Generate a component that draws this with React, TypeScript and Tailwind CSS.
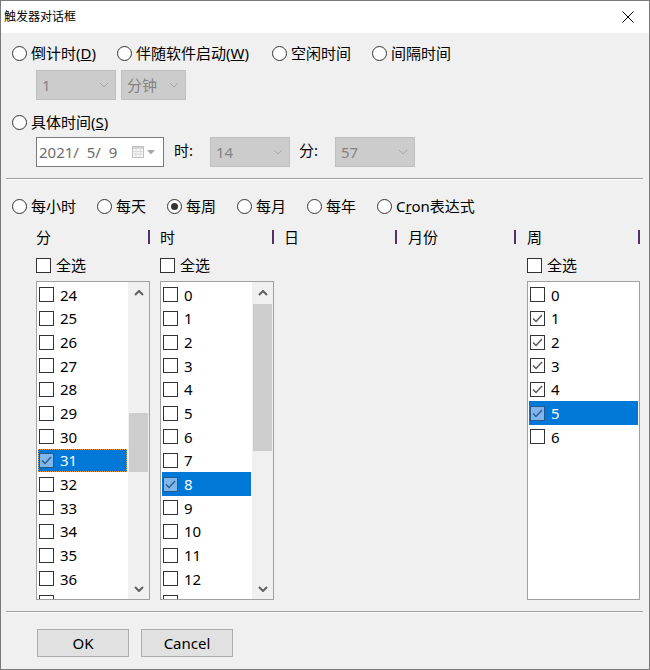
import type { ReactNode } from "react";

function Radio({
  label,
  checked,
  className = "",
}: {
  label: ReactNode;
  checked?: boolean;
  className?: string;
}) {
  return (
    <div className={`flex items-center h-[20px] shrink-0 ${className}`}>
      <span className="w-[15px] h-[15px] rounded-full border border-[#333333] bg-white flex items-center justify-center shrink-0">
        {checked && <span className="w-[7px] h-[7px] rounded-full bg-[#333333]" />}
      </span>
      <span className="ml-[4px] text-[15px] leading-[20px] whitespace-nowrap">{label}</span>
    </div>
  );
}

function Check({ checked, selected }: { checked?: boolean; selected?: boolean }) {
  return (
    <span
      className={`w-[15px] h-[15px] shrink-0 border flex items-center justify-center ${
        selected ? "border-[#23598f] bg-[#80b6ea]" : "border-[#333333] bg-white"
      }`}
    >
      {checked && (
        <svg width="13" height="13" viewBox="0 0 13 13">
          <path
            d="M2 6.5 L5 9.5 L11 3"
            fill="none"
            stroke={selected ? "#285d92" : "#555555"}
            strokeWidth="1.4"
          />
        </svg>
      )}
    </span>
  );
}

function Chevron({ up, color = "#a6a6a6", bold }: { up?: boolean; color?: string; bold?: boolean }) {
  return (
    <svg width="10" height="6" viewBox="0 0 10 6">
      <path
        d={up ? "M1 5 L5 1 L9 5" : "M1 1 L5 5 L9 1"}
        fill="none"
        stroke={color}
        strokeWidth={bold ? 2 : 1}
      />
    </svg>
  );
}

function Combo({ value, className }: { value: string; className: string }) {
  return (
    <div
      className={`h-[30px] bg-[#cccccc] border border-[#bfbfbf] flex items-center justify-between pl-[5px] pr-[6px] text-[15px] text-[#838383] ${className}`}
    >
      <span className="leading-[20px]">{value}</span>
      <Chevron />
    </div>
  );
}

type ListProps = {
  items: string[];
  checked: string[];
  selected?: string;
  focused?: boolean;
  thumb?: string;
  more?: boolean;
  className: string;
};

function ListBox({ items, checked, selected, focused, thumb, more, className }: ListProps) {
  return (
    <div className={`h-[319px] border border-[#a0a0a0] bg-white flex ${className}`}>
      <div className="flex-1 overflow-hidden pt-[1px]">
        {items.map((it) => {
          const sel = it === selected;
          return (
            <div
              key={it}
              className={`h-[23.67px] mx-[1px] pl-[1px] flex items-center gap-[6px] text-[15px] leading-[20px] ${
                sel ? "bg-[#0078d7] text-white" : "text-black"
              } ${sel && focused ? "outline-1 outline-dotted outline-[#e89a40] -outline-offset-1" : ""}`}
            >
              <Check checked={checked.includes(it)} selected={sel} />
              <span>{it}</span>
            </div>
          );
        })}
        {/* next row, only its box top peeks out */}
        {more && (
          <div className="h-[23.67px] mx-[1px] pl-[1px] flex items-center">
            <Check />
          </div>
        )}
      </div>
      {thumb && (
        <div className="w-[21px] shrink-0 bg-[#f0f0f0] flex flex-col">
          <div className="h-[21px] flex items-center justify-center">
            <Chevron up bold color="#606060" />
          </div>
          <div className="flex-1">
            <div className={`mx-[1px] bg-[#cdcdcd] ${thumb}`} />
          </div>
          <div className="h-[21px] flex items-center justify-center">
            <Chevron bold color="#606060" />
          </div>
        </div>
      )}
    </div>
  );
}

function Header({ label, className }: { label: string; className: string }) {
  return (
    <div className={`flex items-center justify-between h-[20px] shrink-0 ${className}`}>
      <span className="text-[15px] leading-[20px]">{label}</span>
      <span className="w-[2px] h-[14px] bg-[#54306a]" />
    </div>
  );
}

function Separator({ className = "" }: { className?: string }) {
  return <div className={`ml-[5px] mr-[6px] border-t border-t-[#a0a0a0] border-b border-b-white ${className}`} />;
}

const minutes = Array.from({ length: 13 }, (_, i) => String(24 + i));
const hours = Array.from({ length: 13 }, (_, i) => String(i));
const weekdays = ["0", "1", "2", "3", "4", "5", "6"];

export default function App() {
  return (
    <div className="w-[650px] h-[670px] flex flex-col border border-[#7a7a7a] font-['Noto_Sans','Noto_Sans_CJK_SC',sans-serif] text-black overflow-hidden">
      <div className="h-[32px] shrink-0 bg-white flex items-center justify-between pl-[3px] pr-[15px]">
        <span className="text-[12px] leading-[16px]">触发器对话框</span>
        <svg width="12" height="12" viewBox="0 0 12 12">
          <path d="M0.5 0.5 L11.5 11.5 M11.5 0.5 L0.5 11.5" stroke="#000" strokeWidth="1" />
        </svg>
      </div>

      <div className="flex-1 bg-[#f0f0f0] flex flex-col">
        <div className="flex mt-[10px] ml-[11px]">
          <Radio className="w-[105px]" label={<>倒计时(<u>D</u>)</>} />
          <Radio className="w-[155px]" label={<>伴随软件启动(<u>W</u>)</>} />
          <Radio className="w-[100px]" label="空闲时间" />
          <Radio label="间隔时间" />
        </div>

        <div className="flex gap-[5px] mt-[7px] ml-[35px]">
          <Combo value="1" className="w-[80px]" />
          <Combo value="分钟" className="w-[65px]" />
        </div>

        <div className="flex mt-[12px] ml-[11px]">
          <Radio label={<>具体时间(<u>S</u>)</>} />
        </div>

        <div className="flex items-center mt-[5px] ml-[35px] h-[30px]">
          <div className="w-[128px] h-[30px] bg-white border border-[#7a7a7a] flex items-center pl-[2px] pr-[8px]">
            <span className="text-[15px] leading-[20px] text-[#6d6d6d] whitespace-pre">2021/  5/  9</span>
            <div className="ml-auto flex items-center gap-[3px]">
              <svg width="12" height="12" viewBox="0 0 12 12">
                <rect x="0.5" y="0.5" width="11" height="11" fill="#f7f7f7" stroke="#c0c0c0" />
                <rect x="1" y="1" width="10" height="2" fill="#d4d4d4" />
                <path d="M4 3 V11 M8 3 V11 M1 5.5 H11 M1 8 H11" stroke="#dadada" strokeWidth="1" />
              </svg>
              <svg width="8" height="5" viewBox="0 0 8 5">
                <path d="M0 0 L8 0 L4 4.5 Z" fill="#a8a8a8" />
              </svg>
            </div>
          </div>
          <span className="ml-[10px] w-[36px] text-[15px] leading-[20px] -mt-[4px]">时:</span>
          <Combo value="14" className="w-[80px]" />
          <span className="ml-[9px] w-[36px] text-[15px] leading-[20px] -mt-[4px]">分:</span>
          <Combo value="57" className="w-[80px]" />
        </div>

        <Separator className="mt-[11px]" />

        <div className="flex mt-[16px] ml-[11px]">
          <Radio className="w-[85px]" label="每小时" />
          <Radio className="w-[70px]" label="每天" />
          <Radio className="w-[70px]" label="每周" checked />
          <Radio className="w-[70px]" label="每月" />
          <Radio className="w-[70px]" label="每年" />
          <Radio label={<>C<u>r</u>on表达式</>} />
        </div>

        <div className="flex mt-[11px] ml-[35px]">
          <Header label="分" className="w-[124px] pr-[10px]" />
          <Header label="时" className="w-[124px] pr-[10px]" />
          <Header label="日" className="w-[124px] pr-[11px]" />
          <Header label="月份" className="w-[119px] pr-[11px]" />
          <Header label="周" className="w-[113px]" />
        </div>

        <div className="flex mt-[8px] ml-[35px] h-[20px] items-center">
          <div className="w-[124px] flex items-center gap-[5px]">
            <Check />
            <span className="text-[15px] leading-[20px]">全选</span>
          </div>
          <div className="w-[367px] flex items-center gap-[5px]">
            <Check />
            <span className="text-[15px] leading-[20px]">全选</span>
          </div>
          <div className="flex items-center gap-[5px]">
            <Check />
            <span className="text-[15px] leading-[20px]">全选</span>
          </div>
        </div>

        <div className="flex mt-[6px] ml-[35px]">
          <ListBox
            className="w-[114px]"
            items={minutes}
            checked={["31"]}
            selected="31"
            focused
            more
            thumb="mt-[110px] h-[59px]"
          />
          <ListBox
            className="w-[114px] ml-[10px]"
            items={hours}
            checked={["8"]}
            selected="8"
            more
            thumb="mt-[1px] h-[147px]"
          />
          <ListBox
            className="w-[113px] ml-[253px]"
            items={weekdays}
            checked={["1", "2", "3", "4", "5"]}
            selected="5"
          />
        </div>

        <Separator className="mt-[11px]" />

        <div className="flex gap-[12px] mt-[16px] ml-[36px]">
          <button className="w-[92px] h-[28px] bg-[#e1e1e1] border border-[#adadad] text-[15px] leading-[20px]">
            OK
          </button>
          <button className="w-[92px] h-[28px] bg-[#e1e1e1] border border-[#adadad] text-[15px] leading-[20px]">
            Cancel
          </button>
        </div>
      </div>
    </div>
  );
}
